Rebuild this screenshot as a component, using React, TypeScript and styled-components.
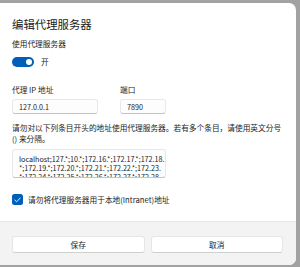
import { createGlobalStyle, styled } from "styled-components";

const GlobalStyle = createGlobalStyle`
  html, body {
    margin: 0;
    padding: 0;
    background: #a2a2a2;
    font-family: "Noto Sans CJK SC", "Noto Sans", sans-serif;
    color: #1b1b1b;
  }
  * {
    box-sizing: border-box;
  }
`;

const App = (): JSX.Element => {
  return (
    <>
      <GlobalStyle />
      <Dialog>
        <Content>
          <Title>编辑代理服务器</Title>
          <Label>使用代理服务器</Label>
          <ToggleRow>
            <Toggle $on>
              <Knob />
            </Toggle>
            <span>开</span>
          </ToggleRow>

          <Fields>
            <Field>
              <Label>代理 IP 地址</Label>
              <Input>127.0.0.1</Input>
            </Field>
            <Field>
              <Label>端口</Label>
              <Input>7890</Input>
            </Field>
          </Fields>

          <Description>
            请勿对以下列条目开头的地址使用代理服务器。若有多个条目，请使用英文分号() 来分隔。
          </Description>

          <TextArea>
            <div>localhost;127.*;10.*;172.16.*;172.17.*;172.18.</div>
            <div>*;172.19.*;172.20.*;172.21.*;172.22.*;172.23.</div>
            <div>*;172.24.*;172.25.*;172.26.*;172.27.*;172.28.</div>
          </TextArea>

          <CheckRow>
            <Check>
              <svg width="7" height="6" viewBox="0 0 7 6">
                <path
                  d="M0.8 3.1 L2.6 4.8 L6.2 1"
                  fill="none"
                  stroke="#fff"
                  strokeWidth="0.9"
                  strokeLinecap="round"
                  strokeLinejoin="round"
                />
              </svg>
            </Check>
            <span>请勿将代理服务器用于本地(Intranet)地址</span>
          </CheckRow>
        </Content>

        <Footer>
          <Button>保存</Button>
          <Button>取消</Button>
        </Footer>
      </Dialog>
    </>
  );
};

export default App;

const Dialog = styled.div`
  margin-top: 3px;
  width: 296px;
  height: 262px;
  background: #ffffff;
  border-radius: 0 7px 7px 0;
  display: flex;
  flex-direction: column;
  overflow: hidden;
`;

const Content = styled.div`
  height: 218px;
  padding: 13px 12px 0 12px;
  display: flex;
  flex-direction: column;
`;

const Title = styled.div`
  font-size: 11.4px;
  line-height: 16px;
  font-weight: 400;
  margin-bottom: 6px;
`;

const Label = styled.div`
  font-size: 7.7px;
  line-height: 11px;
`;

const ToggleRow = styled.div`
  margin-top: 8px;
  display: flex;
  align-items: center;
  gap: 7px;
  font-size: 7.7px;
  line-height: 10px;
`;

const Toggle = styled.div<{ $on?: boolean }>`
  width: 22px;
  height: 10px;
  border-radius: 5px;
  background: ${(props) => (props.$on ? "#005fb8" : "#ffffff")};
  display: flex;
  align-items: center;
  justify-content: ${(props) => (props.$on ? "flex-end" : "flex-start")};
  padding: 0 2px;
`;

const Knob = styled.div`
  width: 6px;
  height: 6px;
  border-radius: 50%;
  background: #ffffff;
`;

const Fields = styled.div`
  margin-top: 17px;
  display: grid;
  grid-template-columns: 86px 46px;
  column-gap: 22px;
`;

const Field = styled.div`
  display: flex;
  flex-direction: column;
  gap: 4px;
`;

const Input = styled.div`
  height: 15px;
  padding-left: 6px;
  font-size: 7.2px;
  line-height: 14px;
  background: #fdfdfd;
  border: 1px solid #e8e8e8;
  border-bottom-color: #c4c4c4;
  border-radius: 3px;
`;

const Description = styled.div`
  margin-top: 8px;
  font-size: 7.7px;
  line-height: 11px;
`;

const TextArea = styled.div`
  margin-top: 5px;
  width: 154px;
  height: 29px;
  padding: 5px 0 0 6px;
  font-size: 7.2px;
  line-height: 9px;
  white-space: nowrap;
  overflow: hidden;
  background: #fdfdfd;
  border: 1px solid #e8e8e8;
  border-bottom-color: #c4c4c4;
  border-radius: 3px;
`;

const CheckRow = styled.div`
  margin-top: 16px;
  display: flex;
  align-items: center;
  gap: 5px;
  font-size: 7.7px;
  line-height: 11px;
`;

const Check = styled.div`
  width: 11px;
  height: 11px;
  border-radius: 2.5px;
  background: #005fb8;
  display: flex;
  align-items: center;
  justify-content: center;
`;

const Footer = styled.div`
  flex: 1;
  background: #f3f3f3;
  border-top: 1px solid #e8e8e8;
  display: grid;
  grid-template-columns: 1fr 1fr;
  column-gap: 6px;
  padding: 14px 13px 0 12px;
  align-items: start;
`;

const Button = styled.div`
  height: 17px;
  background: #ffffff;
  border: 1px solid #e6e6e6;
  border-bottom-color: #cfcfcf;
  border-radius: 3px;
  font-size: 7.7px;
  line-height: 15px;
  text-align: center;
`;
